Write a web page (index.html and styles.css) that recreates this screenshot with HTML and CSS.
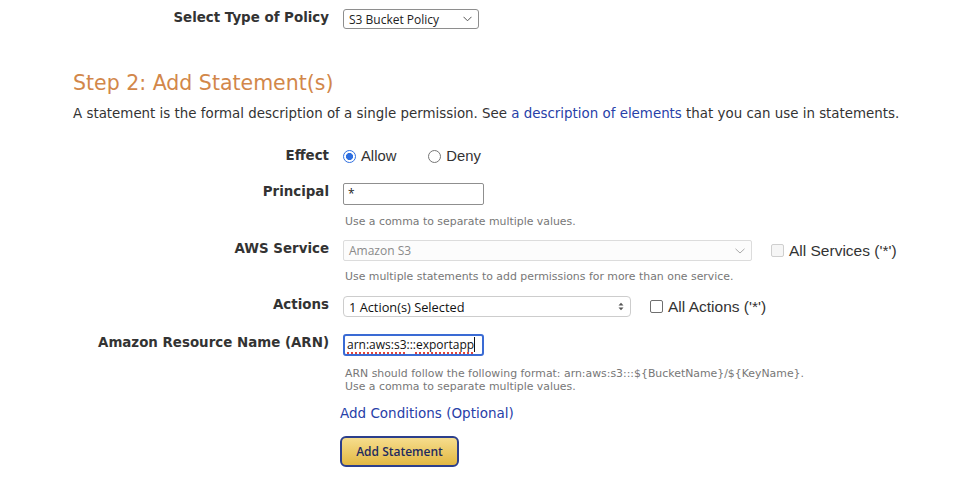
FILE: index.html
```html
<!DOCTYPE html>
<html>
<head>
<meta charset="utf-8">
<link rel="stylesheet" href="styles.css">
</head>
<body>
<div class="page">
  <div class="row row-type">
    <div class="label">Select Type of Policy</div>
    <div class="field">
      <div class="select select-type">
        <span>S3 Bucket Policy</span>
        <svg class="chev" width="9" height="6" viewBox="0 0 9 6"><path d="M0.5 0.8 L4.5 4.8 L8.5 0.8" fill="none" stroke="#555" stroke-width="1"/></svg>
      </div>
    </div>
  </div>

  <h2 class="step">Step 2: Add Statement(s)</h2>
  <p class="intro">A statement is the formal description of a single permission. See <a class="link" href="#">a description of elements</a> that you can use in statements.</p>

  <div class="row row-effect">
    <div class="label">Effect</div>
    <div class="field radios">
      <span class="opt"><span class="radio checked"></span>Allow</span>
      <span class="opt opt-deny"><span class="radio"></span>Deny</span>
    </div>
  </div>

  <div class="row row-principal">
    <div class="label">Principal</div>
    <div class="field">
      <div class="input input-principal">*</div>
      <div class="help help-principal">Use a comma to separate multiple values.</div>
    </div>
  </div>

  <div class="row row-service">
    <div class="label">AWS Service</div>
    <div class="field">
      <div class="inline">
        <div class="select select-service">
          <span>Amazon S3</span>
          <svg class="chev" width="10" height="6" viewBox="0 0 10 6"><path d="M0.5 0.8 L5 5 L9.5 0.8" fill="none" stroke="#aaa" stroke-width="1"/></svg>
        </div>
        <span class="check-opt disabled"><span class="checkbox"></span>All Services ('*')</span>
      </div>
      <div class="help help-service">Use multiple statements to add permissions for more than one service.</div>
    </div>
  </div>

  <div class="row row-actions">
    <div class="label">Actions</div>
    <div class="field">
      <div class="inline">
        <div class="select select-actions">
          <span>1 Action(s) Selected</span>
          <svg class="updown" width="6" height="9" viewBox="0 0 6 9"><path d="M0.5 3.5 L3 0.8 L5.5 3.5 Z M0.5 5.5 L3 8.2 L5.5 5.5 Z" fill="#555"/></svg>
        </div>
        <span class="check-opt"><span class="checkbox"></span>All Actions ('*')</span>
      </div>
    </div>
  </div>

  <div class="row row-arn">
    <div class="label">Amazon Resource Name (ARN)</div>
    <div class="field">
      <div class="input input-arn"><span class="spell">arn:aws:s3</span>:::<span class="spell">exportapp</span><span class="caret"></span></div>
      <div class="help help-arn">ARN should follow the following format: arn:aws:s3:::${BucketName}/${KeyName}.<br>Use a comma to separate multiple values.</div>
    </div>
  </div>

  <div class="actions-block">
    <a class="link cond" href="#">Add Conditions (Optional)</a>
    <button class="btn">Add Statement</button>
  </div>
</div>
</body>
</html>
```

FILE: styles.css
```css
html, body {
  margin: 0;
  padding: 0;
  background: #fff;
}
body {
  font-family: "DejaVu Sans", Verdana, sans-serif;
  color: #333;
  width: 980px;
  height: 500px;
  overflow: hidden;
}
.page {
  padding-top: 9px;
}
.row {
  display: flex;
  align-items: flex-start;
}
.label {
  width: 329px;
  flex: none;
  margin-right: 14px;
  text-align: right;
  font-weight: bold;
  font-size: 13.4px;
  line-height: 16px;
  padding-top: 1px;
  color: #333;
}
.field {
  display: flex;
  flex-direction: column;
}
.select {
  box-sizing: border-box;
  display: flex;
  align-items: center;
  justify-content: space-between;
  font-family: "Open Sans", "Liberation Sans", sans-serif;
  font-size: 12px;
  color: #222;
  background: #fff;
}
.select-type {
  width: 136px;
  height: 20px;
  border: 1px solid #8e8e8e;
  border-radius: 3px;
  padding: 0 6px 0 5px;
}
.step {
  margin: 42px 0 0 73px;
  font-weight: normal;
  font-size: 20.5px;
  line-height: 24px;
  color: #d2874a;
}
.intro {
  margin: 11px 0 0 73px;
  font-size: 13.4px;
  line-height: 16px;
  color: #333;
}
.link {
  color: #2740a8;
  text-decoration: none;
}
.row-effect {
  margin-top: 25px;
}
.radios {
  flex-direction: row;
  align-items: center;
  height: 18px;
  font-family: "Liberation Sans", Arial, sans-serif;
  font-size: 14.8px;
  color: #333;
}
.opt {
  display: inline-flex;
  align-items: center;
}
.opt-deny {
  margin-left: 32px;
}
.radio {
  box-sizing: border-box;
  width: 13px;
  height: 13px;
  border: 1px solid #767676;
  border-radius: 50%;
  margin-right: 5px;
  background: #fff;
}
.radio.checked {
  border: 1.5px solid #2f6fe0;
  background: radial-gradient(circle, #2f6fe0 0 3.3px, #fff 3.8px);
}
.row-principal {
  margin-top: 18px;
}
.input {
  box-sizing: border-box;
  width: 141px;
  height: 22px;
  border: 1px solid #8f8f8f;
  border-radius: 2px;
  font-family: "Open Sans", "Liberation Sans", sans-serif;
  font-size: 12px;
  color: #222;
  padding: 1px 4px;
  line-height: 18px;
}
.help {
  font-size: 10.9px;
  line-height: 13px;
  color: #777;
  padding-left: 2px;
}
.help-principal {
  margin-top: 10px;
}
.row-service {
  margin-top: 12px;
}
.inline {
  display: flex;
  align-items: center;
}
.select-service {
  width: 409px;
  height: 21px;
  border: 1px solid #dcdcdc;
  border-radius: 2px;
  color: #8a8a8a;
  background: #fcfcfc;
  padding: 0 6px 0 5px;
}
.check-opt {
  display: inline-flex;
  align-items: center;
  font-family: "Liberation Sans", Arial, sans-serif;
  font-size: 15.5px;
  color: #333;
}
.check-opt.disabled {
  margin-left: 19px;
}
.checkbox {
  box-sizing: border-box;
  width: 13px;
  height: 13px;
  border: 1px solid #6f6f6f;
  border-radius: 2px;
  margin-right: 5px;
  background: #fff;
}
.check-opt.disabled .checkbox {
  border-color: #cfcfcf;
  background: #f6f6f6;
}
.help-service {
  margin-top: 9px;
}
.row-actions {
  margin-top: 13px;
}
.select-actions {
  width: 288px;
  height: 21px;
  border: 1px solid #cdcdcd;
  border-radius: 4px;
  padding: 0 6px 0 5px;
  color: #111;
  font-size: 12.8px;
}
.row-actions .check-opt {
  margin-left: 19px;
}
.row-arn {
  margin-top: 17px;
}
.input-arn {
  border: 2px solid #3a6bd4;
  border-radius: 3px;
  padding: 0 2px;
  height: 22px;
  color: #111;
  white-space: nowrap;
}
.spell {
  text-decoration: underline dotted #e0463c;
  text-underline-offset: 3px;
  text-decoration-thickness: 1.5px;
}
.caret {
  display: inline-block;
  width: 1px;
  height: 15px;
  background: #111;
  vertical-align: -3px;
}
.help-arn {
  margin-top: 11px;
}
.actions-block {
  margin-left: 340px;
  margin-top: 11px;
  display: flex;
  flex-direction: column;
  align-items: flex-start;
}
.cond {
  font-family: "DejaVu Sans", Verdana, sans-serif;
  font-size: 13.5px;
  line-height: 18px;
}
.btn {
  margin-top: 14px;
  box-sizing: border-box;
  width: 119px;
  height: 31px;
  border: 2px solid #2c3f8c;
  border-radius: 6px;
  background: linear-gradient(#f6dd8d, #e2b843);
  font-family: "Open Sans", "Liberation Sans", sans-serif;
  font-weight: 600;
  font-size: 12px;
  color: #1f2b5e;
  padding: 0;
}
```
